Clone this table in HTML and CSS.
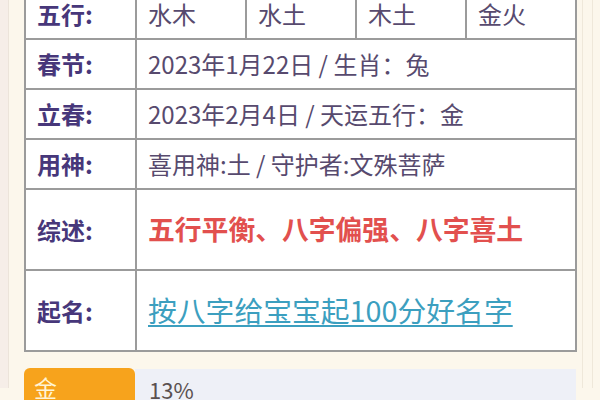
FILE: index.html
```html
<!DOCTYPE html>
<html lang="zh">
<head>
<meta charset="utf-8">
<link rel="stylesheet" href="styles.css">
</head>
<body>
<div class="page">
  <table class="info">
    <colgroup>
      <col class="c-label"><col class="c-sub"><col class="c-sub"><col class="c-sub"><col class="c-sub">
    </colgroup>
    <tr class="r-short">
      <th>五行:</th>
      <td>水木</td><td>水土</td><td>木土</td><td>金火</td>
    </tr>
    <tr class="r-short">
      <th>春节:</th>
      <td colspan="4">2023年1月22日 / 生肖：兔</td>
    </tr>
    <tr class="r-short">
      <th>立春:</th>
      <td colspan="4">2023年2月4日 / 天运五行：金</td>
    </tr>
    <tr class="r-short">
      <th>用神:</th>
      <td colspan="4">喜用神:土 / 守护者:文殊菩萨</td>
    </tr>
    <tr class="r-tall">
      <th>综述:</th>
      <td colspan="4" class="summary">五行平衡、八字偏强、八字喜土</td>
    </tr>
    <tr class="r-tall">
      <th>起名:</th>
      <td colspan="4"><a class="link" href="#">按八字给宝宝起100分好名字</a></td>
    </tr>
  </table>
  <div class="bar">
    <div class="bar-label">金</div>
    <div class="bar-track">13%</div>
  </div>
</div>
</body>
</html>
```

FILE: styles.css
```css
html, body {
  margin: 0;
  padding: 0;
  height: 100%;
  overflow: hidden;
}
body {
  background: #fcf7ec;
  font-family: "Noto Sans CJK SC", "Noto Sans", sans-serif;
}
.page {
  position: relative;
  padding: 0 24px;
  height: 100%;
  background:
    linear-gradient(to right, #f6eee8 0, #f6eee8 8px, #ece4da 8px, #ece4da 9px, transparent 9px),
    linear-gradient(to left, transparent 7px, #efe8da 7px, #efe8da 8px, transparent 8px, transparent 17px, #efe8da 17px, #efe8da 18px, transparent 18px);
}
.info {
  width: 552px;
  margin-top: -12px;
  border-collapse: collapse;
  table-layout: fixed;
  background: #fff;
}
.c-label { width: 111px; }
.c-sub { width: 110px; }
.info th, .info td {
  border: 2px solid #9b9b9b;
  padding: 0 0 0 11px;
  text-align: left;
  vertical-align: middle;
  white-space: nowrap;
  line-height: 1;
}
.info th {
  font-size: 24px;
  font-weight: 700;
  color: #47377a;
}
.info td {
  font-size: 24px;
  color: #574a6e;
}
.r-short { height: 50px; }
.r-tall { height: 81px; }
.info td.summary {
  font-size: 26.8px;
  font-weight: 700;
  color: #e2504e;
}
.link {
  font-size: 28.8px;
  color: #3c9fbf;
  text-decoration: underline;
  text-underline-offset: 3px;
  text-decoration-thickness: 2px;
}
.bar {
  display: flex;
  margin-top: 16px;
  height: 40px;
}
.bar-label {
  width: 111px;
  background: #f7a31c;
  border-radius: 6px 6px 0 0;
  color: #fff4d6;
  font-size: 23px;
  line-height: 1;
  padding: 8px 0 0 10px;
  box-sizing: border-box;
}
.bar-track {
  flex: 1;
  background: #eef0f7;
  color: #5a5050;
  font-size: 22px;
  line-height: 1;
  padding: 9px 0 0 14px;
  margin-top: 1px;
}
```
